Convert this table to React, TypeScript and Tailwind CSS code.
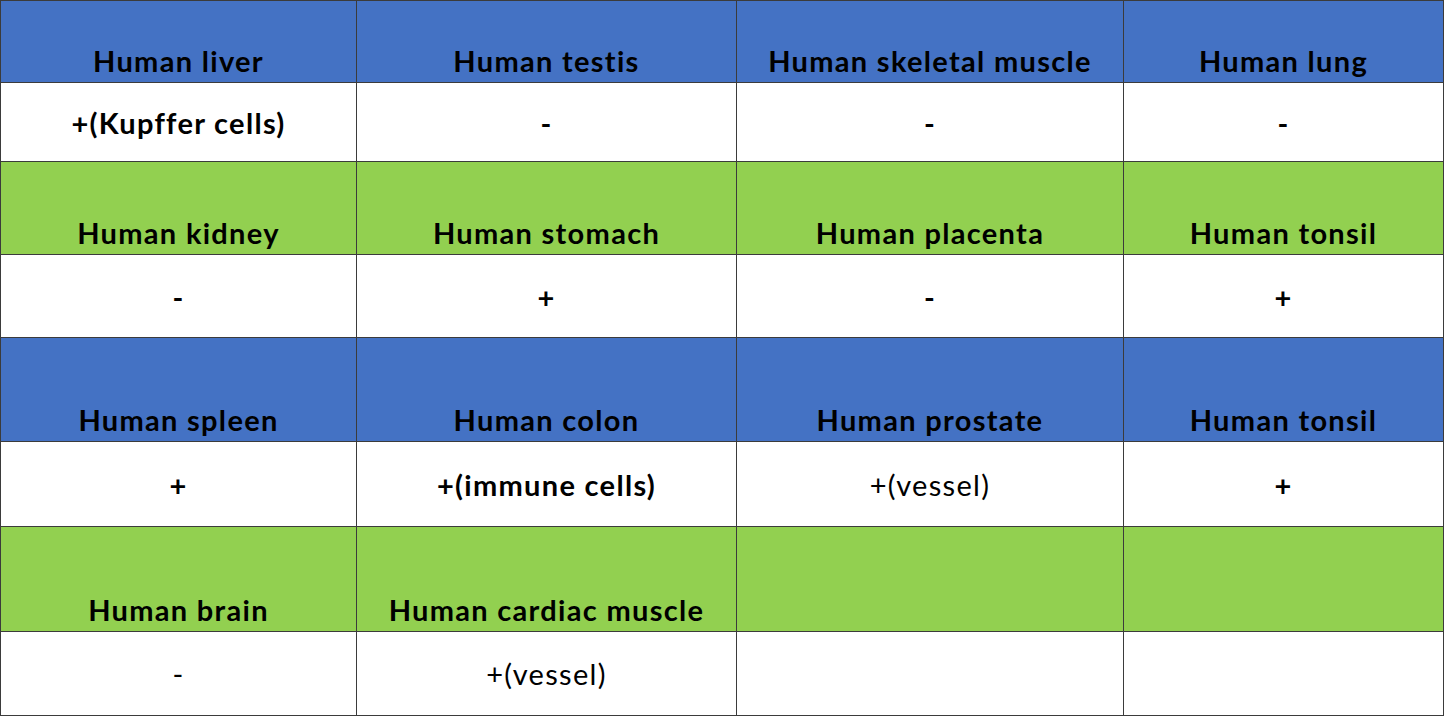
const rows: { tone: "blue" | "green"; heads: string[]; vals: { t: string; bold: boolean }[]; hh: string; vh: string }[] = [
  {
    tone: "blue",
    hh: "h-[81px]",
    vh: "h-[78px]",
    heads: ["Human liver", "Human testis", "Human skeletal muscle", "Human lung"],
    vals: [
      { t: "+(Kupffer cells)", bold: true },
      { t: "-", bold: true },
      { t: "-", bold: true },
      { t: "-", bold: true },
    ],
  },
  {
    tone: "green",
    hh: "h-[92px]",
    vh: "h-[82px]",
    heads: ["Human kidney", "Human stomach", "Human placenta", "Human tonsil"],
    vals: [
      { t: "-", bold: true },
      { t: "+", bold: true },
      { t: "-", bold: true },
      { t: "+", bold: true },
    ],
  },
  {
    tone: "blue",
    hh: "h-[103px]",
    vh: "h-[84px]",
    heads: ["Human spleen", "Human colon", "Human prostate", "Human tonsil"],
    vals: [
      { t: "+", bold: true },
      { t: "+(immune cells)", bold: true },
      { t: "+(vessel)", bold: false },
      { t: "+", bold: true },
    ],
  },
  {
    tone: "green",
    hh: "h-[104px]",
    vh: "h-[83px]",
    heads: ["Human brain", "Human cardiac muscle", "", ""],
    vals: [
      { t: "-", bold: false },
      { t: "+(vessel)", bold: false },
      { t: "", bold: false },
      { t: "", bold: false },
    ],
  },
];

export default function App() {
  return (
    <div className="w-[1445px] h-[717px] bg-white font-['Lato','Liberation_Sans',sans-serif] text-black">
      <div className="grid grid-cols-[355px_379px_386px_319px] gap-px bg-[#3b3b3b] p-px w-[1444px]">
        {rows.map((r, i) => (
          <>
            {r.heads.map((h, j) => (
              <div
                key={`h${i}${j}`}
                className={`${r.hh} ${r.tone === "blue" ? "bg-[#4472c4]" : "bg-[#92d050]"} flex items-end justify-center pb-[7px] text-[29px] tracking-[0.045em] font-bold leading-none`}
              >
                <span>{h}</span>
              </div>
            ))}
            {r.vals.map((v, j) => (
              <div
                key={`v${i}${j}`}
                className={`${r.vh} bg-white flex items-center justify-center text-[29px] tracking-[0.045em] leading-none ${v.bold ? "font-bold" : "font-normal"}`}
              >
                {v.t}
              </div>
            ))}
          </>
        ))}
      </div>
    </div>
  );
}
